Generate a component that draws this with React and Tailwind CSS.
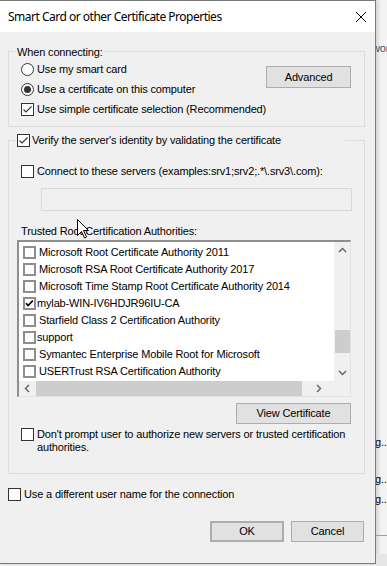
import React from 'react';

const ui = "font-['Liberation_Sans',Arial,sans-serif] text-[11px] tracking-[-0.15px] text-black";

const certs = [
  { name: 'Microsoft Root Certificate Authority 2011', pad: true },
  { name: 'Microsoft RSA Root Certificate Authority 2017', pad: true },
  { name: 'Microsoft Time Stamp Root Certificate Authority 2014', pad: true },
  { name: 'mylab-WIN-IV6HDJR96IU-CA', checked: true },
  { name: 'Starfield Class 2 Certification Authority', pad: true },
  { name: 'support' },
  { name: 'Symantec Enterprise Mobile Root for Microsoft', pad: true },
  { name: 'USERTrust RSA Certification Authority', pad: true },
];

const CheckBox = ({ checked }) => (
  <span className="flex h-[13px] w-[13px] shrink-0 items-center justify-center border border-[#333] bg-white">
    {checked && (
      <svg width="11" height="11" viewBox="0 0 11 11">
        <path d="M1.5 5.5 L4 8 L9.5 2.5" fill="none" stroke="#333" strokeWidth="1.1" />
      </svg>
    )}
  </span>
);

const Radio = ({ checked }) => (
  <span className="flex h-[13px] w-[13px] shrink-0 items-center justify-center rounded-full border border-[#333] bg-white">
    {checked && <span className="h-[7px] w-[7px] rounded-full bg-[#333]" />}
  </span>
);

const ListCheck = ({ checked }) => (
  <span className="flex h-[13px] w-[13px] shrink-0 items-center justify-center border-2 border-[#8e8e8e] bg-white">
    {checked && (
      <svg width="9" height="9" viewBox="0 0 9 9">
        <path d="M1 4.2 L3.2 6.6 L7.8 1.6" fill="none" stroke="#000" strokeWidth="1.7" />
      </svg>
    )}
  </span>
);

const Button = ({ children, className = '' }) => (
  <button className={`flex shrink-0 items-center justify-center border border-[#adadad] bg-[#e1e1e1] ${className}`}>
    {children}
  </button>
);

const Chevron = ({ d }) => (
  <svg width="9" height="9" viewBox="0 0 9 9">
    <path d={d} fill="none" stroke="#606060" strokeWidth="1.4" />
  </svg>
);

export default function App() {
  return (
    <div className={`relative flex h-[566px] w-[387px] overflow-hidden whitespace-nowrap bg-[#f3f3f3] ${ui}`}>
      {/* Dialog */}
      <div className="flex h-[564px] w-[376px] shrink-0 flex-col border-t border-r border-b border-[#7a7a7a] bg-[#f0f0f0] shadow-[2px_0_4px_rgba(0,0,0,0.15)]">
        {/* Title bar */}
        <div className="flex h-[31px] items-center justify-between bg-white pl-[8px] pr-[7px]">
          <span className="font-['Noto_Sans',sans-serif] text-[12px] tracking-[-0.5px]">
            Smart Card or other Certificate Properties
          </span>
          <svg width="12" height="12" viewBox="0 0 12 12" className="mr-[1px]">
            <path d="M1 1 L11 11 M11 1 L1 11" stroke="#000" strokeWidth="1" />
          </svg>
        </div>

        {/* When connecting */}
        <div className="ml-[8px] mt-[19px] w-[357px] border border-[#dcdcdc] pb-[7px]">
          <div className="-mt-[7px] ml-[7px] flex h-[14px] w-fit items-center bg-[#f0f0f0] px-[1px]">
            When connecting:
          </div>
          <div className="flex justify-between pr-[13px]">
            <div className="flex shrink-0 flex-col pl-[12px]">
              <div className="flex h-[20px] items-center gap-[3px]">
                <Radio />
                <span>Use my smart card</span>
              </div>
              <div className="flex h-[20px] items-center gap-[3px]">
                <Radio checked />
                <span>Use a certificate on this computer</span>
              </div>
              <div className="flex h-[20px] items-center gap-[3px]">
                <CheckBox checked />
                <span>Use simple certificate selection (Recommended)</span>
              </div>
            </div>
            <Button className="mt-[7px] h-[22px] w-[85px]">Advanced</Button>
          </div>
        </div>

        {/* Verify group */}
        <div className="ml-[8px] mt-[13px] w-[357px] border border-[#dcdcdc] pb-[19px]">
          <div className="-mt-[7px] ml-[8px] flex h-[13px] w-[328px] items-center gap-[2px] bg-[#f0f0f0]">
            <CheckBox checked />
            <span>Verify the server's identity by validating the certificate</span>
          </div>

          <div className="ml-[12px] mt-[17px] flex h-[14px] items-center gap-[3px]">
            <CheckBox />
            <span>Connect to these servers (examples:srv1;srv2;.*\.srv3\.com):</span>
          </div>

          <div className="ml-[32px] mt-[10px] h-[23px] w-[311px] border border-[#d9d9d9] bg-[#f0f0f0]" />

          <div className="ml-[12px] mt-[13px] flex h-[14px] items-center">
            Trusted Root Certification Authorities:
          </div>

          {/* List box */}
          <div className="ml-[8px] mt-[2px] flex h-[157px] w-[334px] flex-col border-t-2 border-l-2 border-r border-b border-t-[#8e8e8e] border-l-[#8e8e8e] border-r-[#e3e3e3] border-b-[#e3e3e3]">
            <div className="flex h-[139px]">
              <div className="flex w-[315px] flex-col overflow-hidden bg-white pt-[2px]">
                {certs.map((c) => (
                  <div key={c.name} className="flex h-[17px] shrink-0 items-center pl-[4px]">
                    <ListCheck checked={c.checked} />
                    <span className={c.pad ? 'pl-[3px]' : 'pl-[1px]'}>{c.name}</span>
                  </div>
                ))}
              </div>
              <div className="flex w-[16px] flex-col items-center bg-[#f0f0f0]">
                <div className="flex h-[17px] items-center justify-center">
                  <Chevron d="M1 6 L4.5 2.5 L8 6" />
                </div>
                <div className="flex-1" />
                <div className="mb-[11px] h-[23px] w-[15px] bg-[#cdcdcd]" />
                <div className="flex h-[17px] items-center justify-center">
                  <Chevron d="M1 3 L4.5 6.5 L8 3" />
                </div>
              </div>
            </div>
            <div className="flex h-[15px]">
              <div className="flex w-[315px] items-center bg-[#f0f0f0]">
                <div className="flex w-[17px] justify-center">
                  <Chevron d="M6 1 L2.5 4.5 L6 8" />
                </div>
                <div className="h-full w-[266px] bg-[#cdcdcd]" />
                <div className="flex flex-1 justify-center">
                  <Chevron d="M3 1 L6.5 4.5 L3 8" />
                </div>
              </div>
              <div className="w-[16px] bg-[#f0f0f0]" />
            </div>
          </div>

          <div className="mt-[6px] flex justify-end pr-[13px]">
            <Button className="h-[21px] w-[115px]">View Certificate</Button>
          </div>

          <div className="ml-[12px] mt-[4px] flex items-start gap-[3px]">
            <CheckBox />
            <span className="leading-[13px]">
              Don't prompt user to authorize new servers or trusted certification
              <br />
              authorities.
            </span>
          </div>
        </div>

        <div className="ml-[8px] mt-[14px] flex h-[13px] items-center gap-[3px]">
          <CheckBox />
          <span>Use a different user name for the connection</span>
        </div>

        <div className="mr-[11px] mt-[20px] flex justify-end gap-[7px]">
          <Button className="h-[21px] w-[74px] border-2 border-[#0078d7]">OK</Button>
          <Button className="h-[21px] w-[73px]">Cancel</Button>
        </div>
      </div>

      {/* Window behind */}
      <div className="flex flex-1 flex-col overflow-hidden">
        <div className="-ml-[4px] mt-[40px] text-[#2b4f80]">work</div>
        <div className="-ml-[1px] mt-[377px]">g...</div>
        <div className="-ml-[1px] mt-[21px]">g...</div>
        <div className="-ml-[1px] mt-[3px]">g...</div>
        <div className="mt-[28px] h-[1px] bg-[#a0a0a0]" />
        <div className="mt-[18px] flex-1 bg-[#e6e6e6]" />
      </div>

      {/* Mouse pointer */}
      <svg
        className="pointer-events-none absolute left-[77px] top-[219px]"
        width="13"
        height="20"
        viewBox="0 0 13 20"
      >
        <path d="M0.5 0.5 L0.5 16.5 L4.5 12.5 L7.5 19 L9.5 18 L6.5 11.5 L11.5 11.5 Z" fill="#fff" stroke="#000" strokeWidth="1" />
      </svg>
    </div>
  );
}
